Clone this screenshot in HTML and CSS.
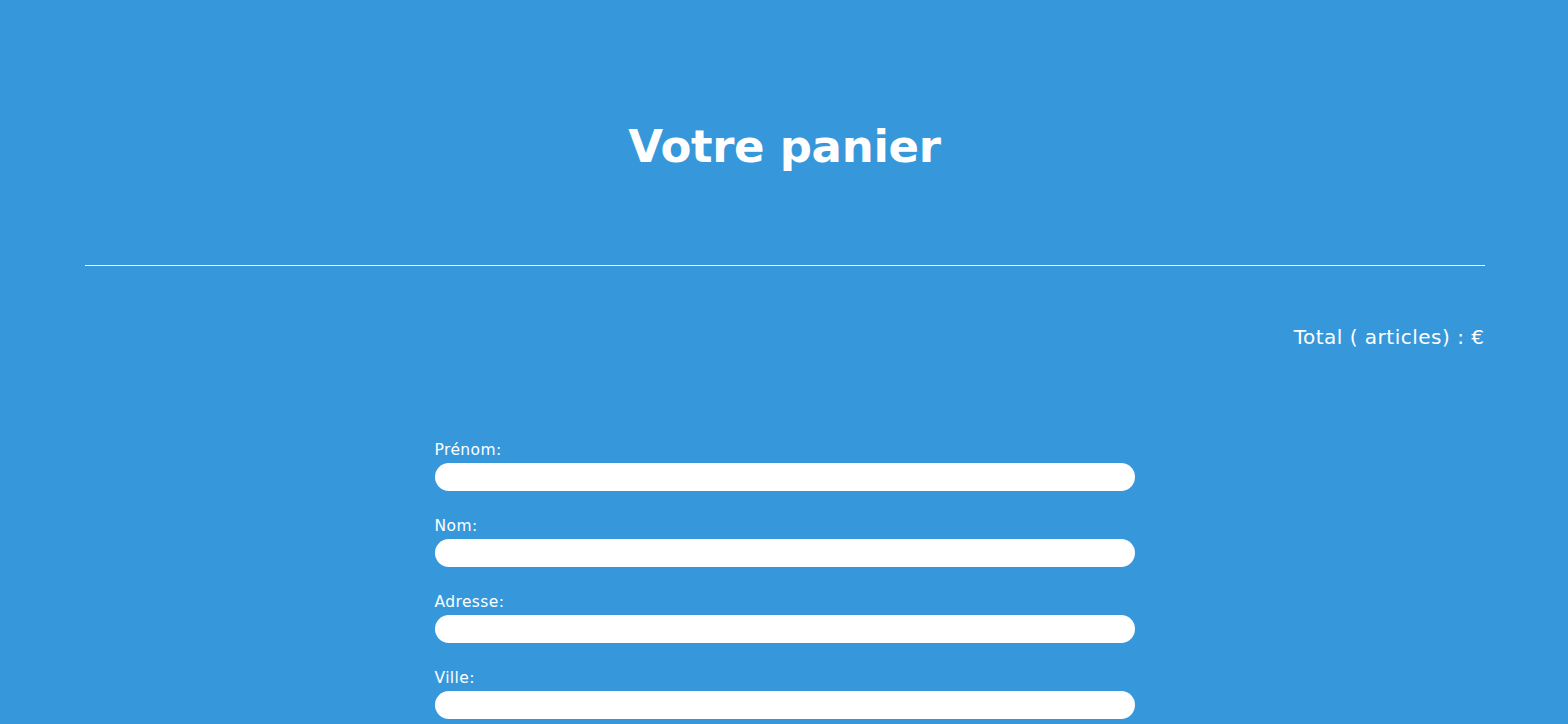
FILE: index.html
```html
<!DOCTYPE html>
<html lang="fr">
<head>
<meta charset="utf-8">
<title>Votre panier</title>
<link rel="stylesheet" href="styles.css">
</head>
<body>
<main class="page">
  <header class="header">
    <h1 class="title">Votre panier</h1>
  </header>
  <hr class="divider">
  <p class="total">Total ( articles) : €</p>
  <form class="form">
    <div class="field">
      <label class="label" for="prenom">Prénom:</label>
      <input class="input" id="prenom" type="text">
    </div>
    <div class="field">
      <label class="label" for="nom">Nom:</label>
      <input class="input" id="nom" type="text">
    </div>
    <div class="field">
      <label class="label" for="adresse">Adresse:</label>
      <input class="input" id="adresse" type="text">
    </div>
    <div class="field">
      <label class="label" for="ville">Ville:</label>
      <input class="input" id="ville" type="text">
    </div>
  </form>
</main>
</body>
</html>
```
FILE: styles.css
```css
html, body {
  margin: 0;
  padding: 0;
}
body {
  background: #3698db;
  color: #ffffff;
  font-family: "DejaVu Sans", "Open Sans", sans-serif;
  overflow: hidden;
  height: 724px;
}
.page {
  width: 1400px;
  margin: 0 auto;
  padding-left: 1px;
}
.header {
  height: 265px;
  display: flex;
  justify-content: center;
  padding-top: 118px;
  box-sizing: border-box;
}
.title {
  margin: 0;
  font-size: 45px;
  line-height: 58px;
  font-weight: 700;
  letter-spacing: -0.3px;
}
.divider {
  margin: 0;
  border: 0;
  height: 1px;
  background: #ffffff;
}
.total {
  margin: 57px 0 0;
  text-align: right;
  font-size: 20px;
  line-height: 28px;
  letter-spacing: 0.5px;
}
.form {
  width: 700px;
  margin: 89px auto 0;
  display: flex;
  flex-direction: column;
  gap: 25px;
}
.field {
  display: flex;
  flex-direction: column;
  gap: 3px;
}
.label {
  font-size: 15.5px;
  line-height: 20px;
  letter-spacing: 0.4px;
}
.input {
  display: block;
  width: 100%;
  height: 28px;
  box-sizing: border-box;
  border: 0;
  border-radius: 14px;
  background: #ffffff;
  padding: 0 12px;
  margin: 0;
}
```
